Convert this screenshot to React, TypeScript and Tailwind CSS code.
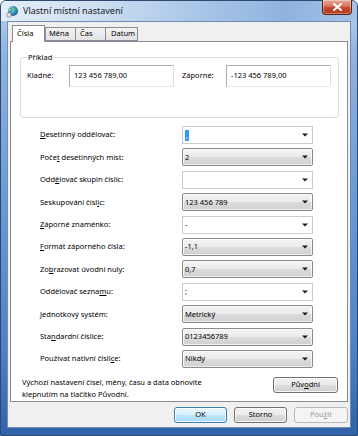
import clsx from 'clsx';

type Row = { label: string; ul: number; value: string; edit?: boolean; selected?: boolean };

const rows: Row[] = [
  { label: 'Desetinný oddělovač:', ul: 0, value: ',', edit: true, selected: true },
  { label: 'Počet desetinných míst:', ul: 4, value: '2' },
  { label: 'Oddělovač skupin číslic:', ul: 3, value: '', edit: true },
  { label: 'Seskupování číslic:', ul: 16, value: '123 456 789' },
  { label: 'Záporné znaménko:', ul: 0, value: '-', edit: true },
  { label: 'Formát záporného čísla:', ul: 0, value: '-1,1' },
  { label: 'Zobrazovat úvodní nuly:', ul: 2, value: '0,7' },
  { label: 'Oddělovač seznamu:', ul: 15, value: ';', edit: true },
  { label: 'Jednotkový systém:', ul: 0, value: 'Metrický' },
  { label: 'Standardní číslice:', ul: 3, value: '0123456789' },
  { label: 'Používat nativní číslice:', ul: 22, value: 'Nikdy' },
];

function Ul({ t, i }: { t: string; i: number }) {
  return (
    <>
      {t.slice(0, i)}
      <span className="underline underline-offset-[1px]">{t[i]}</span>
      {t.slice(i + 1)}
    </>
  );
}

function Arrow() {
  return (
    <svg width="6" height="4" viewBox="0 0 6 4" className="ml-auto mr-[4px]">
      <path d="M0 0.5h6L3 3.5z" fill="#1a1a1a" />
    </svg>
  );
}

function Combo({ row }: { row: Row }) {
  return (
    <div
      className={clsx(
        'flex h-[18px] w-[131px] items-center pl-[2px]',
        row.edit
          ? 'border border-[#c9ccd2] bg-white'
          : 'rounded-[2px] border border-[#8a8a8a] bg-[linear-gradient(#f3f3f3_0%,#ebebeb_48%,#dcdcdc_52%,#cfcfcf_100%)] shadow-[inset_0_0_0_1px_rgba(255,255,255,0.7)]'
      )}
    >
      {row.selected ? (
        <span className="bg-[#3399ff] px-px leading-[11px] text-white">{row.value}</span>
      ) : (
        <span>{row.value}</span>
      )}
      <Arrow />
    </div>
  );
}

function Button({ children, primary, disabled, className }: { children: React.ReactNode; primary?: boolean; disabled?: boolean; className?: string }) {
  return (
    <div
      className={clsx(
        'flex h-[16px] items-center justify-center rounded-[3px] border',
        disabled
          ? 'border-[#b5b9bc] bg-[#f4f4f4] text-[#9a9a9a]'
          : primary
            ? 'border-[#3c7fb1] bg-[linear-gradient(#eaf6fd_0%,#d9f0fc_48%,#bee6fd_52%,#a7d9f5_100%)] shadow-[inset_0_0_0_1px_rgba(255,255,255,0.8)]'
            : 'border-[#707070] bg-[linear-gradient(#f2f2f2_0%,#ebebeb_48%,#dddddd_52%,#cfcfcf_100%)] shadow-[inset_0_0_0_1px_rgba(255,255,255,0.8)]',
        className
      )}
    >
      {children}
    </div>
  );
}

export default function App() {
  return (
    <div className="h-[436px] w-[358px] bg-white font-['Noto_Sans',sans-serif] text-[7.5px] text-black">
      <div className="flex h-full flex-col rounded-t-[6px] border border-[#2f4a70] bg-[linear-gradient(#bcd4ee_0%,#8fb4df_12%,#6b9bd4_45%,#4e82c6_80%,#2f62a8_100%)]">
        {/* title bar */}
        <div className="flex h-[20px] shrink-0 items-center rounded-t-[5px] bg-[linear-gradient(100deg,#e4eef8_0%,#cfe0f2_25%,#a9c6e8_55%,#8fb3de_80%,#a5c3e6_100%)] pl-[5px]">
          <svg width="13" height="13" viewBox="0 0 13 13">
            <defs>
              <radialGradient id="g" cx="0.35" cy="0.35" r="0.7">
                <stop offset="0" stopColor="#bfe8f5" />
                <stop offset="0.6" stopColor="#2f8fc4" />
                <stop offset="1" stopColor="#1a5e8c" />
              </radialGradient>
            </defs>
            <circle cx="7" cy="6" r="5" fill="url(#g)" />
            <path d="M4 3.5c1.5-.5 2.5.5 2 1.8-.4 1-1.8 1-2 2.2M8 2.2c.6 1 1.8 1 2.3 2" stroke="#3aa356" strokeWidth="1.3" fill="none" />
            <rect x="1" y="8" width="4" height="4" rx="0.8" fill="#e7e7e7" stroke="#6d6d6d" strokeWidth="0.6" />
          </svg>
          <span className="ml-[4px] text-[9px] text-[#1b1b1b]">Vlastní místní nastavení</span>
          <div className="ml-auto mr-[5px] -mt-[1px] flex h-[15px] w-[30px] items-center justify-center self-start rounded-b-[4px] border border-t-0 border-[#5b2117] bg-[linear-gradient(#e8a898_0%,#d9735d_45%,#c2452b_55%,#b53a20_100%)] shadow-[inset_0_0_0_1px_rgba(255,255,255,0.35)]">
            <svg width="9" height="8" viewBox="0 0 9 8">
              <path d="M1 1l7 6M8 1L1 7" stroke="#fff" strokeWidth="2" strokeLinecap="square" />
            </svg>
          </div>
        </div>

        {/* client area */}
        <div className="mx-[6px] mb-[7px] flex flex-1 flex-col border border-[#6f8db3] bg-[#f0f0f0]">
          {/* tabs */}
          <div className="flex items-end pl-[4px] pt-[3px]">
            <div className="relative z-10 -mb-px flex h-[17px] w-[33px] items-center border border-b-0 border-[#898c95] bg-white pl-[4px]">
              Čísla
            </div>
            <div className="flex h-[14px] w-[31px] items-center border border-[#898c95] bg-[linear-gradient(#f2f2f2,#e3e3e3)] pl-[3px]">Měna</div>
            <div className="-ml-px flex h-[14px] w-[31px] items-center border border-[#898c95] bg-[linear-gradient(#f2f2f2,#e3e3e3)] pl-[4px]">Čas</div>
            <div className="-ml-px flex h-[14px] w-[33px] items-center border border-[#898c95] bg-[linear-gradient(#f2f2f2,#e3e3e3)] pl-[5px]">Datum</div>
          </div>

          {/* tab panel */}
          <div className="ml-[2px] mr-[2px] flex h-[361px] flex-col border border-[#898c95] bg-white">
            <fieldset className="ml-[9px] mr-[8px] mt-[10px] h-[66px] rounded-[3px] border border-[#d5dfe5] px-[6px]">
              <legend className="ml-[0px] px-[1px] leading-[10px]">Příklad</legend>
              <div className="mt-[3px] flex items-center">
                <span className="w-[42px]">Kladné:</span>
                <div className="flex h-[22px] w-[105px] items-center border border-[#abadb3] border-r-[#dbdfe6] border-b-[#e3e9ef] pl-[4px]">123 456 789,00</div>
                <span className="ml-[8px] w-[44px]">Záporné:</span>
                <div className="flex h-[22px] w-[105px] items-center border border-[#abadb3] border-r-[#dbdfe6] border-b-[#e3e9ef] pl-[4px]">-123 456 789,00</div>
              </div>
            </fieldset>

            <div className="mt-[8px] flex flex-col gap-[4.4px]">
              {rows.map((r) => (
                <div key={r.label} className="flex items-center pl-[29px]">
                  <div className="w-[142px]">
                    <Ul t={r.label} i={r.ul} />
                  </div>
                  <Combo row={r} />
                </div>
              ))}
            </div>

            <div className="mt-[8px] flex items-start">
              <div className="pl-[11px] leading-[12px]">
                <div>Výchozí nastavení čísel, měny, času a data obnovíte</div>
                <div>klepnutím na tlačítko Původní.</div>
              </div>
              <Button className="ml-auto mr-[9px] mt-[1px] w-[65px]">
                <Ul t="Původní" i={3} />
              </Button>
            </div>
          </div>

          {/* dialog buttons */}
          <div className="mt-[5px] flex justify-end gap-[7px] pr-[2px]">
            <Button primary className="w-[53px]">OK</Button>
            <Button className="w-[53px]">Storno</Button>
            <Button disabled className="w-[54px]">
              <Ul t="Použít" i={3} />
            </Button>
          </div>
        </div>
      </div>
    </div>
  );
}
